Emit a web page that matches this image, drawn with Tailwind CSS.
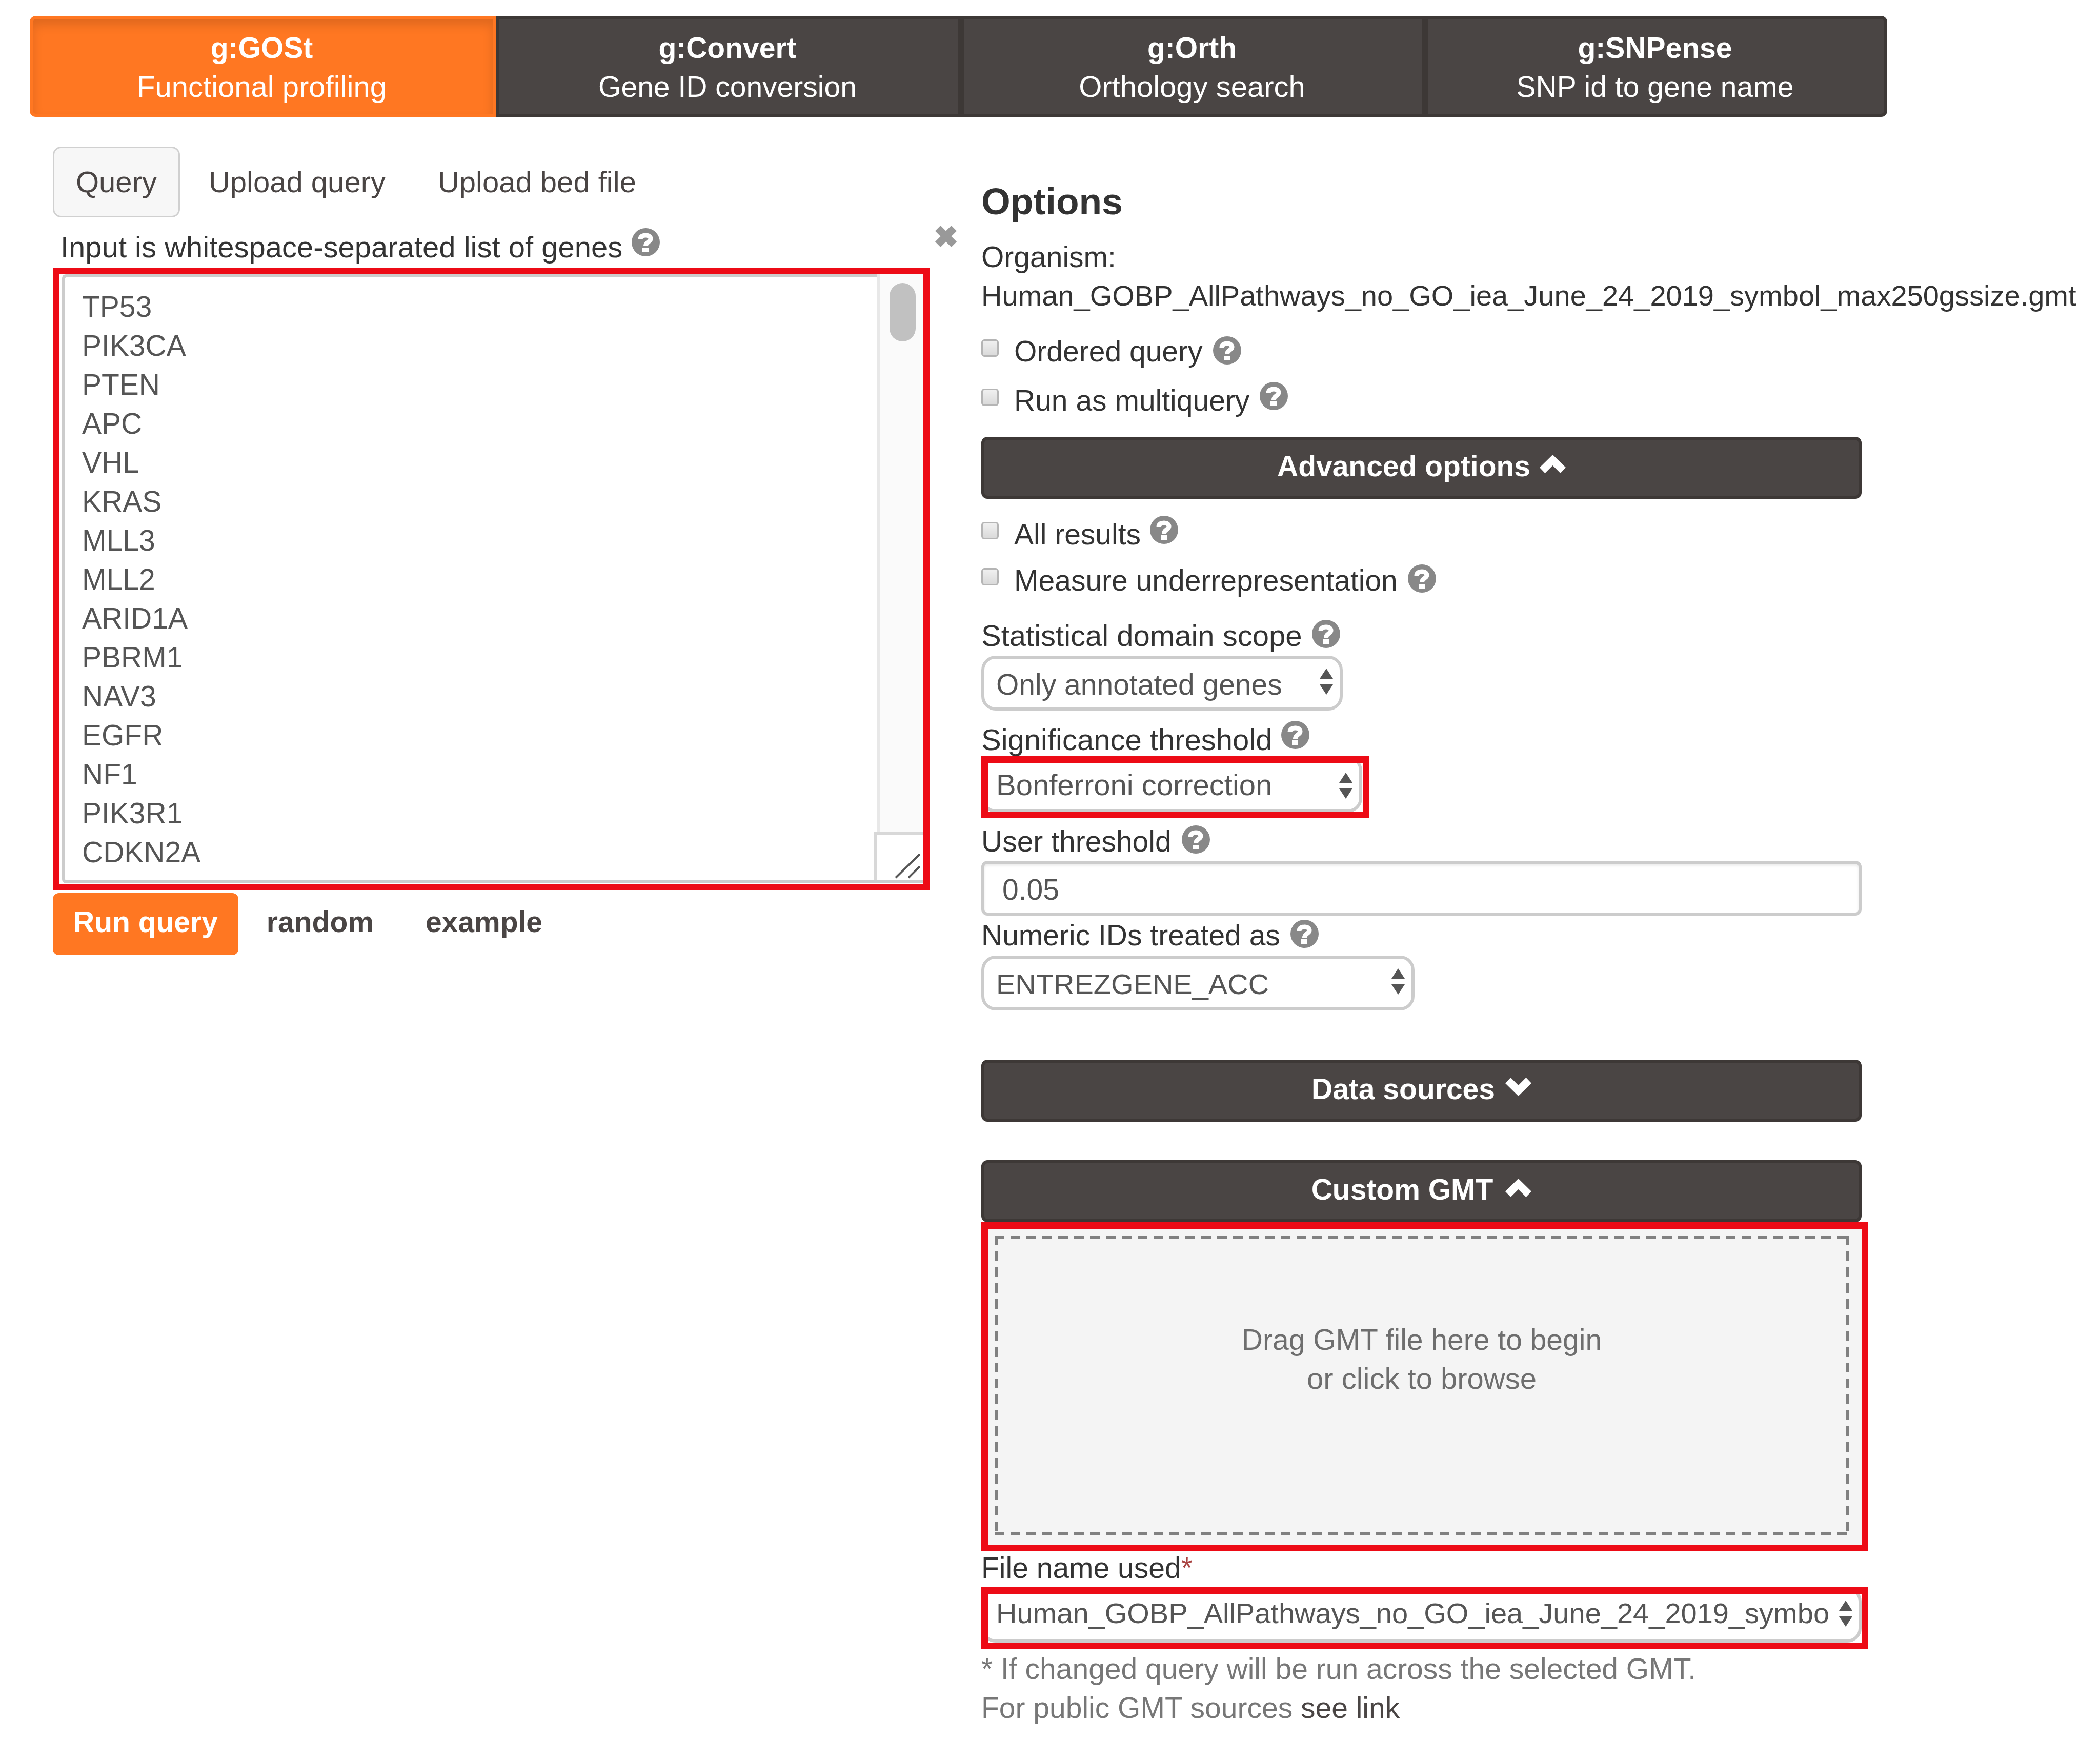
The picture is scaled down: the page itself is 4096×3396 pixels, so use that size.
<!DOCTYPE html>
<html lang="en">
<head>
<meta charset="utf-8">
<title>g:Profiler</title>
<script src="https://cdn.jsdelivr.net/npm/@tailwindcss/browser@4"></script>
</head>
<body class="min-h-screen bg-white font-['Liberation_Sans',Arial,sans-serif] text-[57px] leading-[76px] text-[#333]">

<svg class="hidden" aria-hidden="true">
  <symbol id="help" viewBox="0 0 55 55">
    <circle cx="27.5" cy="27.5" r="27.5" fill="#888"/>
    <path d="M17 22C17 16 21.500 14 27.500 14C34 14 37 17.500 37 21C37 27 27.500 26.500 27.500 35" fill="none" stroke="#fff" stroke-width="9"/>
    <rect x="21" y="38" width="12" height="9" fill="#fff"/>
  </symbol>
  <symbol id="up" viewBox="0 0 51 36"><path d="M25.500 0L51 25L40.500 36L25.500 21L10.500 36L0 25Z" fill="#fff"/></symbol>
  <symbol id="down" viewBox="0 0 51 36"><path d="M25.500 36L51 11L40.500 0L25.500 15L10.500 0L0 11Z" fill="#fff"/></symbol>
  <symbol id="updown" viewBox="0 0 26 51"><path d="M13 0L26 20H0ZM13 51L26 31H0Z" fill="#555"/></symbol>
</svg>

<nav class="ml-[58px] mr-[415px] pt-[31px]">
  <div class="grid grid-cols-[909fr_908fr_904fr_902fr] text-center text-white">
    <a href="#gost" class="block rounded-l-xl border-6 border-[#ff7722] bg-[#ff7722] pt-[18px] pr-[4px] pb-[15px] shadow-[inset_0_12px_20px_rgba(0,0,0,0.125)]"><b class="block">g:GOSt</b><span class="block text-[58px]">Functional profiling</span></a>
    <a href="#convert" class="block border-6 border-[#3d3836] bg-[#4a4544] pt-[18px] pr-[4px] pb-[15px]"><b class="block">g:Convert</b><span class="block">Gene ID conversion</span></a>
    <a href="#orth" class="block border-6 border-[#3d3836] bg-[#4a4544] pt-[18px] pr-[4px] pb-[15px]"><b class="block">g:Orth</b><span class="block text-[58px]">Orthology search</span></a>
    <a href="#snpense" class="block rounded-r-xl border-6 border-[#3d3836] bg-[#4a4544] pt-[18px] pr-[4px] pb-[15px]"><b class="block">g:SNPense</b><span class="block">SNP id to gene name</span></a>
  </div>
</nav>

<main class="grid grid-cols-[1811fr_1717fr] pl-[103px] pr-[465px]">
  <section class="min-w-0 pt-[58px]">
    <div class="flex gap-[10px] text-[58px] text-[#4a4544]">
      <a href="#query" class="rounded-2xl border-3 border-[#d0d0d0] bg-[#f7f7f7] px-[42px] py-[28px]">Query</a>
      <a href="#upload" class="px-[46px] py-[31px]">Upload query</a>
      <a href="#bed" class="px-[46px] py-[31px]">Upload bed file</a>
    </div>
    <div class="mt-[16px] mr-[48px] flex h-[82px] items-start">
      <label for="genes" class="pl-[15px] pt-[4px] text-[58px]">Input is whitespace-separated list of genes</label>
      <svg class="mt-[5px] ml-[18px] size-[55px]"><use href="#help"/></svg>
      <button type="button" aria-label="Clear" class="ml-auto">
        <svg class="size-[42px]" viewBox="0 0 42 42"><path d="M10.500 0L21 10.500L31.500 0L42 10.500L31.500 21L42 31.500L31.500 42L21 31.500L10.500 42L0 31.500L10.500 21L0 10.500Z" fill="#999"/></svg>
      </button>
    </div>
    <div class="relative mr-[100px] h-[1215px] border-13 border-[#ed0b16] pb-[1px] pl-[5px]">
      <textarea id="genes" class="block size-full resize-none overflow-hidden rounded-l-lg border-6 border-r-0 border-[#ccc] pt-[19px] pl-[33px] text-[#555]">TP53
PIK3CA
PTEN
APC
VHL
KRAS
MLL3
MLL2
ARID1A
PBRM1
NAV3
EGFR
NF1
PIK3R1
CDKN2A</textarea>
      <div class="absolute top-0 right-0 h-[1087px] w-[91px] border-l-6 border-[#e8e8e8] bg-[#fafafa] pt-[17px] pl-[19px]">
        <div class="h-[114px] w-[51px] rounded-full bg-[#c1c1c1]"></div>
      </div>
      <div class="absolute right-0 bottom-[7px] h-[95px] w-[96px] border-t-6 border-l-6 border-[#d8d8d8] bg-white">
        <svg class="size-full" viewBox="0 0 90 89"><path d="M36 84L83 38M61 84L83 62" stroke="#555" stroke-width="4" fill="none"/></svg>
      </div>
    </div>
    <div class="mt-[5px] flex font-bold text-[#4a4544]">
      <button type="button" class="rounded-xl bg-[#ff7722] px-[40px] pt-[18px] pb-[27px] text-white">Run query</button>
      <a href="#random" class="ml-[55px] pt-[18px]">random</a>
      <a href="#example" class="ml-[101px] pt-[18px]">example</a>
    </div>
  </section>

  <section class="min-w-0 pt-[123px]">
    <h2 class="text-[73px] leading-[84px] font-bold">Options</h2>
    <p class="mt-[28px]">Organism:</p>
    <p class="text-[56px] whitespace-nowrap">Human_GOBP_AllPathways_no_GO_iea_June_24_2019_symbol_max250gssize.gmt</p>

    <div class="mt-[32px] flex items-start">
      <input id="ordered" type="checkbox" class="mt-[15px] size-[34px] appearance-none rounded-md border-3 border-[#b5b5b5] bg-linear-to-b from-[#f0f0f0] to-[#dadada]">
      <label for="ordered" class="ml-[30px]">Ordered query</label>
      <svg class="mt-[9px] ml-[20px] size-[55px]"><use href="#help"/></svg>
    </div>
    <div class="mt-[20px] flex items-start">
      <input id="multi" type="checkbox" class="mt-[15px] size-[34px] appearance-none rounded-md border-3 border-[#b5b5b5] bg-linear-to-b from-[#f0f0f0] to-[#dadada]">
      <label for="multi" class="ml-[30px]">Run as multiquery</label>
      <svg class="mt-[2px] ml-[20px] size-[55px]"><use href="#help"/></svg>
    </div>

    <button type="button" class="mt-[33px] flex w-full items-start justify-center rounded-xl border-6 border-[#3d3836] bg-[#4a4544] pt-[13px] pb-[20px] font-bold text-white">Advanced options<svg class="mt-[16px] ml-[18px] h-[36px] w-[51px]"><use href="#up"/></svg></button>

    <div class="mt-[31px] flex items-start">
      <input id="all" type="checkbox" class="mt-[14px] size-[34px] appearance-none rounded-md border-3 border-[#b5b5b5] bg-linear-to-b from-[#f0f0f0] to-[#dadada]">
      <label for="all" class="ml-[30px]">All results</label>
      <svg class="mt-[2px] ml-[18px] size-[55px]"><use href="#help"/></svg>
    </div>
    <div class="mt-[14px] flex items-start">
      <input id="under" type="checkbox" class="mt-[14px] size-[34px] appearance-none rounded-md border-3 border-[#b5b5b5] bg-linear-to-b from-[#f0f0f0] to-[#dadada]">
      <label for="under" class="ml-[30px]">Measure underrepresentation</label>
      <svg class="mt-[7px] ml-[20px] size-[55px]"><use href="#help"/></svg>
    </div>

    <div class="mt-[38px] flex items-start leading-[64px]">
      <label for="scope" class="text-[58px]">Statistical domain scope</label>
      <svg class="mt-[1px] ml-[20px] size-[55px]"><use href="#help"/></svg>
    </div>
    <div class="relative mt-[7px] w-[705px]">
      <select id="scope" class="block h-[107px] w-full appearance-none rounded-[28px] border-6 border-[#ccc] bg-white pt-[4px] pl-[23px] text-[#555]"><option>Only annotated genes</option></select>
      <svg class="pointer-events-none absolute top-[25px] right-[19px] h-[51px] w-[26px]"><use href="#updown"/></svg>
    </div>

    <div class="mt-[25px] flex h-[64px] items-start leading-[64px]">
      <label for="signif" class="text-[58px]">Significance threshold</label>
      <svg class="mt-[-5px] ml-[18px] size-[55px]"><use href="#help"/></svg>
    </div>
    <div class="relative h-[121px] w-[757px]">
      <select id="signif" class="block h-[110px] w-[743px] appearance-none rounded-[28px] border-6 border-[#ccc] bg-white pt-[2px] pl-[23px] text-[58px] text-[#555]"><option>Bonferroni correction</option></select>
      <svg class="pointer-events-none absolute top-[32px] right-[33px] h-[51px] w-[26px]"><use href="#updown"/></svg>
      <div class="pointer-events-none absolute inset-0 border-13 border-[#ed0b16]"></div>
    </div>

    <div class="mt-[13px] flex items-start leading-[64px]">
      <label for="user">User threshold</label>
      <svg class="mt-[1px] ml-[20px] size-[55px]"><use href="#help"/></svg>
    </div>
    <input id="user" type="text" value="0.05" class="mt-[6px] block h-[107px] w-full rounded-xl border-6 border-[#ccc] pt-[4px] pl-[35px] text-[#555] shadow-[inset_0_4px_4px_rgba(0,0,0,0.075)]">

    <div class="mt-[6px] flex items-start leading-[64px]">
      <label for="numeric">Numeric IDs treated as</label>
      <svg class="mt-[2px] ml-[20px] size-[55px]"><use href="#help"/></svg>
    </div>
    <div class="relative mt-[8px] w-[845px]">
      <select id="numeric" class="block h-[107px] w-full appearance-none rounded-[28px] border-6 border-[#ccc] bg-white pt-[4px] pl-[23px] text-[56px] text-[#555]"><option>ENTREZGENE_ACC</option></select>
      <svg class="pointer-events-none absolute top-[25px] right-[19px] h-[51px] w-[26px]"><use href="#updown"/></svg>
    </div>

    <button type="button" class="mt-[96px] flex w-full items-start justify-center rounded-xl border-6 border-[#3d3836] bg-[#4a4544] pt-[13px] pb-[20px] font-bold text-white">Data sources<svg class="mt-[16px] ml-[20px] h-[36px] w-[51px]"><use href="#down"/></svg></button>
    <button type="button" class="mt-[75px] flex w-full items-start justify-center rounded-xl border-6 border-[#3d3836] bg-[#4a4544] pt-[13px] pb-[20px] font-bold text-white">Custom GMT<svg class="mt-[17px] ml-[24px] h-[36px] w-[51px]"><use href="#up"/></svg></button>

    <div class="mr-[-13px] h-[642px] border-13 border-[#ed0b16] bg-[#f4f4f4] pt-[13px] pr-[25px] pb-[18px] pl-[13px]">
      <button type="button" class="relative flex size-full flex-col items-center pt-[165px] text-[#6e6e6e]">
        <svg class="absolute inset-0 size-full" aria-hidden="true">
          <g stroke="#808080" stroke-width="12" stroke-dasharray="19 12">
            <line x1="0" y1="0" x2="100%" y2="0"/>
            <line x1="0" y1="100%" x2="100%" y2="100%"/>
            <line x1="0" y1="0" x2="0" y2="100%"/>
            <line x1="100%" y1="0" x2="100%" y2="100%"/>
          </g>
        </svg>
        <span>Drag GMT file here to begin</span>
        <span class="text-[58px]">or click to browse</span>
      </button>
    </div>

    <label for="file" class="block leading-[64px]">File name used<span class="text-[#a94442]">*</span></label>
    <div class="relative mt-[6px] mr-[-13px] h-[121px]">
      <div class="pr-[13px]">
        <select id="file" class="block h-[108px] w-full appearance-none rounded-[28px] border-6 border-[#ccc] bg-white pb-[6px] pl-[23px] text-[56px] text-[#555]"><option>Human_GOBP_AllPathways_no_GO_iea_June_24_2019_symbo</option></select>
      </div>
      <svg class="pointer-events-none absolute top-[26px] right-[31px] h-[51px] w-[26px]"><use href="#updown"/></svg>
      <div class="pointer-events-none absolute inset-0 border-13 border-[#ed0b16]"></div>
    </div>
    <p class="text-[#777]">* If changed query will be run across the selected GMT.<br>For public GMT sources <a href="#gmt" class="text-[#4a4544]">see link</a></p>
  </section>
</main>
</body>
</html>
